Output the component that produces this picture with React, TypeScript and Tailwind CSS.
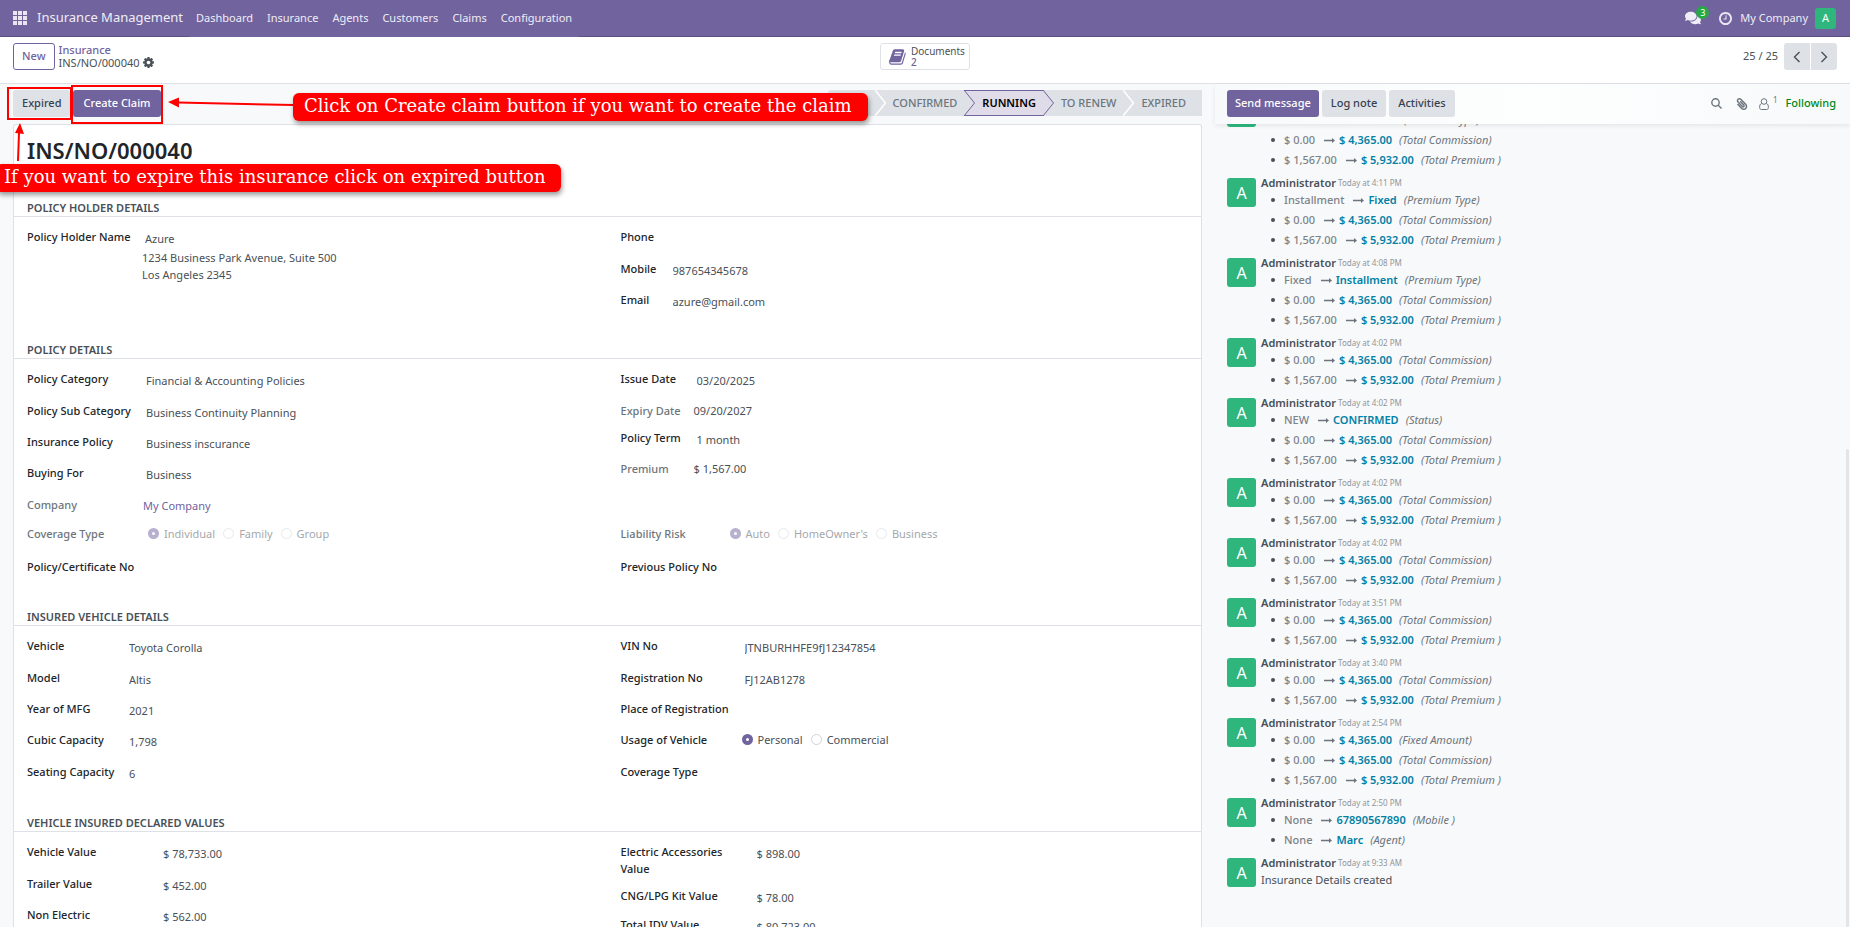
import { ReactNode } from 'react'
import { FaComments, FaPaperclip } from 'react-icons/fa'

interface Field {
    label: string
    value?: string
    height?: string
    muted?: boolean
    link?: boolean
    lines?: string[]
    options?: string[]
    disabled?: boolean
}

interface Change {
    from: string
    to: string
    field: string
}

interface Message {
    time: string
    changes?: Change[]
    body?: string
}

const menus = ['Dashboard', 'Insurance', 'Agents', 'Customers', 'Claims', 'Configuration']

const commission: Change = { from: '$ 0.00', to: '$ 4,365.00', field: 'Total Commission' }
const premium: Change = { from: '$ 1,567.00', to: '$ 5,932.00', field: 'Total Premium ' }

const messages: Message[] = [
    { time: '4:12 PM', changes: [{ from: 'Installment', to: 'Fixed', field: 'Premium Type' }, commission, premium] },
    { time: '4:11 PM', changes: [{ from: 'Installment', to: 'Fixed', field: 'Premium Type' }, commission, premium] },
    { time: '4:08 PM', changes: [{ from: 'Fixed', to: 'Installment', field: 'Premium Type' }, commission, premium] },
    { time: '4:02 PM', changes: [commission, premium] },
    { time: '4:02 PM', changes: [{ from: 'NEW', to: 'CONFIRMED', field: 'Status' }, commission, premium] },
    { time: '4:02 PM', changes: [commission, premium] },
    { time: '4:02 PM', changes: [commission, premium] },
    { time: '3:51 PM', changes: [commission, premium] },
    { time: '3:40 PM', changes: [commission, premium] },
    { time: '2:54 PM', changes: [{ ...commission, field: 'Fixed Amount' }, commission, premium] },
    {
        time: '2:50 PM',
        changes: [
            { from: 'None', to: '67890567890', field: 'Mobile ' },
            { from: 'None', to: 'Marc', field: 'Agent' },
        ],
    },
    { time: '9:33 AM', body: 'Insurance Details created' },
]

const holderLeft: Field[] = [
    { label: 'Policy Holder Name', value: 'Azure', lines: ['1234 Business Park Avenue, Suite 500', 'Los Angeles 2345'] },
]
const holderRight: Field[] = [
    { label: 'Phone', value: '', height: 'h-8' },
    { label: 'Mobile', value: '987654345678' },
    { label: 'Email', value: 'azure@gmail.com' },
]
const policyLeft: Field[] = [
    { label: 'Policy Category', value: 'Financial & Accounting Policies', height: 'h-8' },
    { label: 'Policy Sub Category', value: 'Business Continuity Planning' },
    { label: 'Insurance Policy', value: 'Business inscurance' },
    { label: 'Buying For', value: 'Business', height: 'h-8' },
    { label: 'Company', value: 'My Company', muted: true, link: true, height: 'h-[29px]' },
]
const policyRight: Field[] = [
    { label: 'Issue Date', value: '03/20/2025', height: 'h-8' },
    { label: 'Expiry Date', value: '09/20/2027', muted: true, height: 'h-[27px]' },
    { label: 'Policy Term', value: '1 month' },
    { label: 'Premium', value: '$ 1,567.00', muted: true },
]
const coverageLeft: Field[] = [
    { label: 'Coverage Type', options: ['Individual', 'Family', 'Group'], muted: true, disabled: true, height: 'h-[33px]' },
    { label: 'Policy/Certificate No', value: '' },
]
const coverageRight: Field[] = [
    { label: 'Liability Risk', options: ['Auto', "HomeOwner's", 'Business'], muted: true, disabled: true, height: 'h-[33px]' },
    { label: 'Previous Policy No', value: '' },
]
const vehicleLeft: Field[] = [
    { label: 'Vehicle', value: 'Toyota Corolla', height: 'h-8' },
    { label: 'Model', value: 'Altis' },
    { label: 'Year of MFG', value: '2021' },
    { label: 'Cubic Capacity', value: '1,798', height: 'h-8' },
    { label: 'Seating Capacity', value: '6', height: 'h-8' },
]
const vehicleRight: Field[] = [
    { label: 'VIN No', value: 'JTNBURHHFE9fJ12347854', height: 'h-8' },
    { label: 'Registration No', value: 'FJ12AB1278' },
    { label: 'Place of Registration', value: '' },
    { label: 'Usage of Vehicle', options: ['Personal', 'Commercial'], height: 'h-8' },
    { label: 'Coverage Type', value: '', height: 'h-8' },
]
const valuesLeft: Field[] = [
    { label: 'Vehicle Value', value: '$ 78,733.00', height: 'h-8' },
    { label: 'Trailer Value', value: '$ 452.00' },
    { label: 'Non Electric', value: '$ 562.00' },
]
const valuesRight: Field[] = [
    { label: 'Electric Accessories Value', value: '$ 898.00', height: 'h-11' },
    { label: 'CNG/LPG Kit Value', value: '$ 78.00', height: 'h-[29px]' },
    { label: 'Total IDV Value', value: '$ 80,723.00' },
]

function GridIcon() {
    return (
        <svg className="h-[14px] w-[14px]" viewBox="0 0 14 14" fill="#e9e6f2">
            {[0, 5, 10].map(y => [0, 5, 10].map(x => <rect key={`${x}-${y}`} x={x} y={y} width="4" height="4" />))}
        </svg>
    )
}

function CogIcon() {
    return (
        <svg className="h-[11px] w-[11px]" viewBox="128 128 1536 1536" fill="#495057">
            <path d="M1152 896q0-106-75-181t-181-75-181 75-75 181 75 181 181 75 181-75 75-181zm512-109v222q0 12-8 23t-20 13l-185 28q-19 54-39 91 35 50 107 138 10 12 10 25t-9 23q-27 37-99 108t-94 71q-12 0-26-9l-138-108q-44 23-91 38-16 136-29 186-7 28-36 28h-222q-14 0-24.500-8.500t-11.500-21.500l-28-184q-49-16-90-37l-141 107q-10 9-25 9-14 0-25-11-126-114-165-168-7-10-7-23 0-12 8-23 15-21 51-66.500t54-70.500q-27-50-41-99l-183-27q-13-2-21-12.500t-8-23.500v-222q0-12 8-23t19-13l186-28q14-46 39-92-40-57-107-138-10-12-10-24 0-10 9-23 26-36 98.500-107.500t94.500-71.500q13 0 26 10l138 107q44-23 91-38 16-136 29-186 7-28 36-28h222q14 0 24.500 8.500t11.500 21.500l28 184q49 16 90 37l142-107q9-9 24-9 13 0 25 10 129 119 165 170 7 8 7 22 0 12-8 23-15 21-51 66.500t-54 70.500q26 50 41 98l183 28q13 2 21 12.500t8 23.500z" />
        </svg>
    )
}

function ClockIcon() {
    return (
        <svg className="h-[13px] w-[13px]" viewBox="128 128 1536 1536" fill="#e9e6f2">
            <path d="M1024 544v448q0 14-9 23t-23 9h-320q-14 0-23-9t-9-23v-64q0-14 9-23t23-9h224v-352q0-14 9-23t23-9h64q14 0 23 9t9 23zm416 352q0-148-73-273t-198-198-273-73-273 73-198 198-73 273 73 273 198 198 273 73 273-73 198-198 73-273zm224 0q0 209-103 385.500t-279.500 279.500-385.500 103-385.500-103-279.500-279.500-103-385.500 103-385.500 279.500-279.500 385.500-103 385.500 103 279.500 279.500 103 385.500z" />
        </svg>
    )
}

function BookIcon() {
    return (
        <svg className="h-[18px] w-[18px]" viewBox="0 0 1792 1792" fill="#71639e">
            <path d="M1639 478q40 57 18 129l-275 906q-19 64-76.500 107.500t-122.500 43.500h-923q-77 0-148.500-53.500t-99.500-131.500q-24-67-2-127 0-4 3-27t4-37q1-8-3-21.500t-3-19.500q2-11 8-21t16.500-23.500 16.500-23.500q23-38 45-91.500t30-91.500q3-10 .5-30t-.5-28q3-11 17-28t17-23q21-36 42-92t25-90q1-9-2.500-32t.5-28q4-13 22-30.500t22-22.500q19-26 42.500-84.500t27.500-96.500q1-8-3-25.500t-2-26.500q2-8 9-18t18-23 17-21q8-12 16.500-30.500t15-35 16-36 19.500-32 26.500-23.500 36-11.500 47.500 5.500l-1 3q38-9 51-9h761q74 0 114 56t18 130l-274 906q-36 119-71.500 153.500t-128.500 34.500h-869q-27 0-38 15-11 16-1 43 24 70 144 70h923q29 0 56-15.500t35-41.500l300-987q7-22 5-57 38 15 59 43zm-1064 2q-4 13 2 22.500t20 9.500h608q13 0 25.500-9.500t16.500-22.500l21-64q4-13-2-22.500t-20-9.500h-608q-13 0-25.500 9.500t-16.500 22.500zm-83 256q-4 13 2 22.500t20 9.500h608q13 0 25.500-9.500t16.500-22.500l21-64q4-13-2-22.500t-20-9.500h-608q-13 0-25.500 9.500t-16.500 22.500z" />
        </svg>
    )
}

function Chevron({ left = false }: { left?: boolean }) {
    return (
        <svg className="h-3 w-2" viewBox="0 0 8 12" fill="none" stroke="#495057" strokeWidth="1.4">
            <path d={left ? 'M6.500 1 1.500 6l5 5' : 'M1.500 1l5 5-5 5'} />
        </svg>
    )
}

// Arrow-shaped joint between two status bar steps
function StepJoint({ kind }: { kind: 'plain' | 'enter' | 'leave' }) {
    const left = kind === 'leave' ? '#dfdbe9' : '#dee2e6'
    const right = kind === 'enter' ? '#dfdbe9' : '#dee2e6'
    return (
        <svg className="h-[26px] w-[11px] shrink-0" viewBox="0 0 11 26" fill="none">
            <rect width="11" height="26" fill={right} />
            <path d="M0 0l10.500 13L0 26z" fill={left} />
            {kind === 'enter' && <path d="M0 .5h11M0 25.500h11" stroke="#71639e" />}
            <path d="M0 0l10.500 13L0 26" stroke={kind === 'plain' ? '#fff' : '#71639e'} strokeWidth={kind === 'plain' ? 1.5 : 1} />
        </svg>
    )
}

function Radios({ field, id }: { field: Field; id: string }) {
    return (
        <div className={`flex items-center gap-2 leading-[17px] ${field.disabled ? 'pl-[5px] opacity-50' : ''}`}>
            {field.options?.map((option, i) => (
                <label key={option} className="flex items-center gap-[5px]">
                    <input
                        type="radio"
                        name={id}
                        defaultChecked={i === 0}
                        disabled={field.disabled}
                        className="h-[11px] w-[11px] appearance-none rounded-full border border-[#ced4da] bg-white checked:border-4 checked:border-[#71639e]"
                    />
                    {option}
                </label>
            ))}
        </div>
    )
}

function Fields({ fields, labelWidth, name }: { fields: Field[]; labelWidth: string; name: string }) {
    return (
        <div className="pl-[13px]">
            {fields.map((field, i) => {
                const id = `${name}-${i}`
                const labelClass = `${labelWidth} shrink-0 pr-1 font-medium leading-[17px] ${field.muted ? 'text-[#6c757d]' : 'text-[#212529]'}`
                return (
                    <div key={id} className={`flex items-start ${field.height || 'h-[31px]'}`}>
                        {field.options ? (
                            <span className={labelClass}>{field.label}</span>
                        ) : (
                            <label htmlFor={id} className={labelClass}>{field.label}</label>
                        )}
                        {field.options && <Radios field={field} id={id} />}
                        {!field.options && field.link && (
                            <a id={id} href="#company" className="pt-px leading-[17px] text-[#71639e]">{field.value}</a>
                        )}
                        {!field.options && !field.link && field.muted && (
                            <output id={id} className="leading-[17px]">{field.value}</output>
                        )}
                        {!field.options && !field.muted && (
                            <div className="min-w-0 flex-1">
                                <input
                                    id={id}
                                    defaultValue={field.value}
                                    className="mt-0.5 mb-0.5 block h-[17px] w-full bg-transparent pl-[3px] outline-none"
                                />
                                {field.lines?.map(line => (
                                    <p key={line} className="leading-[17px]">{line}</p>
                                ))}
                            </div>
                        )}
                    </div>
                )
            })}
        </div>
    )
}

function Section({ title, children }: { title: string; children: ReactNode }) {
    return (
        <section className="mb-[19px]">
            <h2 className="border-b border-[#dee2e6] pl-[13px] font-semibold leading-[17px] text-[#495057]">{title}</h2>
            <div className="pt-[11px]">{children}</div>
        </section>
    )
}

function Avatar({ className }: { className: string }) {
    return (
        <span className={`flex shrink-0 items-center justify-center rounded-[3px] bg-[#2eb67d] text-white ${className}`}>A</span>
    )
}

function MessageItem({ message }: { message: Message }) {
    return (
        <article className="flex gap-[5px] pb-[5px]">
            <Avatar className="mt-[3px] h-[29px] w-[29px] text-base" />
            <div>
                <header className="flex h-[15px] items-center gap-0.5 leading-[15px]">
                    <strong className="font-semibold text-[#495057]">Administrator</strong>
                    <time className="text-[8px] text-[#8f959b]">Today at {message.time}</time>
                </header>
                {message.body && <p className="h-5 leading-5">{message.body}</p>}
                {message.changes && (
                    <ul>
                        {message.changes.map(change => (
                            <li key={change.field} className="flex h-5 items-center pl-2.5">
                                <span className="mr-[9px] h-1 w-1 rounded-full bg-[#495057]" />
                                <span className="font-medium text-[#7c8288]">{change.from}</span>
                                <svg className="ml-[9px] mr-1 h-[5px] w-[11px]" viewBox="0 0 11 5" fill="#6c757d">
                                    <path d="M0 1.700h8V0l3 2.500L8 5V3.300H0z" />
                                </svg>
                                <span className="font-semibold text-[#0180a5]">{change.to}</span>
                                <em className="ml-[7px] text-[#6c757d]">({change.field})</em>
                            </li>
                        ))}
                    </ul>
                )}
            </div>
        </article>
    )
}

function Annotations() {
    return (
        <div className="pointer-events-none absolute inset-0 overflow-hidden">
            <div className="absolute left-[7px] top-[87px] h-[33px] w-[65px] border-2 border-[#ff0000]" />
            <div className="absolute left-[71px] top-[85px] h-[39px] w-[92px] border-2 border-[#ff0000]" />
            <svg className="absolute left-0 top-0 h-[200px] w-[300px]" viewBox="0 0 300 200" stroke="#ff0000" strokeWidth="2" fill="#ff0000">
                <path d="M294 105L178 102.500" />
                <path d="M168 102l11-4.500v10z" stroke="none" />
                <path d="M18 161l1-28" />
                <path d="M20 123l4 11-9-1z" stroke="none" />
            </svg>
            <p className="absolute left-[293px] top-[93px] h-7 w-[575px] whitespace-nowrap rounded-md bg-[#ff0000] pl-[11px] font-['DejaVu_Serif',serif] text-lg leading-[26px] text-white shadow-[1px_3px_5px_rgba(0,0,0,0.4)]">
                Click on Create claim button if you want to create the claim
            </p>
            <p className="absolute -left-1 top-[164px] h-7 w-[565px] whitespace-nowrap rounded-md bg-[#ff0000] pl-2 font-['DejaVu_Serif',serif] text-lg leading-[26px] text-white shadow-[1px_3px_5px_rgba(0,0,0,0.4)]">
                If you want to expire this insurance click on expired button
            </p>
        </div>
    )
}

export default function App() {
    const stepClass = 'h-[26px] bg-[#dee2e6] pl-[7px] font-medium text-[#6c757d]'

    return (
        <div className="relative flex h-screen flex-col overflow-hidden bg-[#f8f9fa] font-['Noto_Sans',sans-serif] text-[11px] text-[#495057]">
            {/* Navbar */}
            <header className="flex h-[37px] shrink-0 bg-[#71639e] text-[#efedf5]">
                <a href="#home" className="flex items-center gap-2.5 border-b border-[#5a4f7f] pl-[13px] pr-1.5 text-[13px]">
                    <GridIcon />
                    Insurance Management
                </a>
                <nav className="flex items-center">
                    {menus.map(menu => (
                        <button key={menu} className="h-full px-[7px]">{menu}</button>
                    ))}
                </nav>
                <div className="flex flex-1 items-center justify-end border-b border-[#5a4f7f] pr-3.5">
                    <button className="relative mr-[18px]" aria-label="Messages">
                        <FaComments className="h-4 w-4" />
                        <span className="absolute -top-1 left-[11px] h-[13px] w-[13px] rounded-full bg-[#28a745] text-[9px] leading-[13px] text-white">3</span>
                    </button>
                    <button className="mr-2" aria-label="Activities"><ClockIcon /></button>
                    <button className="mr-[7px]">My Company</button>
                    <Avatar className="h-[21px] w-[21px]" />
                </div>
            </header>

            {/* Control panel */}
            <div className="grid h-[47px] shrink-0 grid-cols-[1fr_auto_1fr] items-start border-b border-[#dee2e6] bg-white pl-[13px] pr-[13px] pt-1.5">
                <div className="flex gap-1">
                    <button className="h-[27px] rounded-[3px] border border-[#71639e] px-2 font-medium text-[#71639e]">New</button>
                    <div className="leading-[13px]">
                        <a href="#insurance" className="block font-medium text-[#71639e]">Insurance</a>
                        <span className="flex items-center gap-[3px]">
                            INS/NO/000040
                            <button aria-label="Actions"><CogIcon /></button>
                        </span>
                    </div>
                </div>
                <button className="flex h-[27px] w-[90px] items-center gap-1 rounded-[3px] border border-[#dee2e6] pl-2 text-left text-[10px] leading-[11px]">
                    <BookIcon />
                    <span>
                        Documents
                        <span className="block font-medium text-[#71639e]">2</span>
                    </span>
                </button>
                <div className="flex items-center justify-end gap-px">
                    <span className="mr-[5px] text-[11px]">25 / 25</span>
                    <button aria-label="Previous" className="flex h-[27px] w-[26px] items-center justify-center rounded-l-[3px] bg-[#dee2e6]"><Chevron left /></button>
                    <button aria-label="Next" className="flex h-[27px] w-[26px] items-center justify-center rounded-r-[3px] bg-[#dee2e6]"><Chevron /></button>
                </div>
            </div>

            <div className="grid min-h-0 flex-1 grid-cols-[1215fr_635fr]">
                {/* Form */}
                <main className="flex min-h-0 flex-col overflow-hidden px-[13px]">
                    <div className="flex h-10 shrink-0 justify-between pt-1.5">
                        <div className="flex gap-[3px]">
                            <button className="h-[27px] rounded-[3px] bg-[#dee2e6] px-[9px] font-medium text-[#374151]">Expired</button>
                            <button className="h-[27px] rounded-[3px] bg-[#71639e] px-2.5 font-medium text-white">Create Claim</button>
                        </div>
                        <div className="flex">
                            <button aria-label="Draft" className="h-[26px] w-[47px] rounded-l-[3px] bg-[#dee2e6]" />
                            <StepJoint kind="plain" />
                            <button className={`${stepClass} pr-[7px]`}>CONFIRMED</button>
                            <StepJoint kind="enter" />
                            <button className="h-[26px] border-y border-[#71639e] bg-[#dfdbe9] px-[7px] font-semibold text-black">RUNNING</button>
                            <StepJoint kind="leave" />
                            <button className={`${stepClass} pr-[7px]`}>TO RENEW</button>
                            <StepJoint kind="plain" />
                            <button className={`${stepClass} pr-4`}>EXPIRED</button>
                        </div>
                    </div>

                    <div className="min-h-0 flex-1 overflow-hidden rounded-t-[3px] border border-b-0 border-[#dee2e6] bg-white">
                        <h1 className="mb-[35px] pl-[13px] pt-[11px] text-[22px] font-semibold leading-7 text-[#212529]">INS/NO/000040</h1>
                        <Section title="POLICY HOLDER DETAILS">
                            <div className="grid grid-cols-2">
                                <Fields name="holder-left" fields={holderLeft} labelWidth="w-[115px]" />
                                <Fields name="holder-right" fields={holderRight} labelWidth="w-[49px]" />
                            </div>
                        </Section>
                        <Section title="POLICY DETAILS">
                            <div className="grid grid-cols-2">
                                <Fields name="policy-left" fields={policyLeft} labelWidth="w-[116px]" />
                                <Fields name="policy-right" fields={policyRight} labelWidth="w-[73px]" />
                                <Fields name="coverage-left" fields={coverageLeft} labelWidth="w-[116px]" />
                                <Fields name="coverage-right" fields={coverageRight} labelWidth="w-[104px]" />
                            </div>
                        </Section>
                        <Section title="INSURED VEHICLE DETAILS">
                            <div className="grid grid-cols-2">
                                <Fields name="vehicle-left" fields={vehicleLeft} labelWidth="w-[99px]" />
                                <Fields name="vehicle-right" fields={vehicleRight} labelWidth="w-[121px]" />
                            </div>
                        </Section>
                        <Section title="VEHICLE INSURED DECLARED VALUES">
                            <div className="grid grid-cols-2">
                                <Fields name="values-left" fields={valuesLeft} labelWidth="w-[133px]" />
                                <Fields name="values-right" fields={valuesRight} labelWidth="w-[133px]" />
                            </div>
                        </Section>
                    </div>
                </main>

                {/* Chatter */}
                <aside className="relative flex min-h-0 flex-col">
                    <div className="z-10 flex h-10 shrink-0 justify-between bg-gradient-to-r from-[#f8f9fa] via-[#fdfefe] to-[#f8f9fa] pl-3 pr-3.5 pt-1.5 shadow-[0_2px_5px_rgba(0,0,0,0.08)]">
                        <div className="flex gap-[3px]">
                            <button className="h-[27px] rounded-[3px] bg-[#71639e] px-2 font-medium text-white">Send message</button>
                            <button className="h-[27px] rounded-[3px] bg-[#dee2e6] px-[9px] font-medium text-[#374151]">Log note</button>
                            <button className="h-[27px] rounded-[3px] bg-[#dee2e6] px-[9px] font-medium text-[#374151]">Activities</button>
                        </div>
                        <div className="flex h-[27px] items-center text-[#6c757d]">
                            <button aria-label="Search Messages" className="mr-3.5">
                                <svg className="h-[11px] w-[11px]" viewBox="0 0 11 11" fill="none" stroke="currentColor" strokeWidth="1.4">
                                    <circle cx="4.500" cy="4.500" r="3.700" />
                                    <path d="M7.200 7.200l3.300 3.300" />
                                </svg>
                            </button>
                            <button aria-label="Attach files" className="mr-[11px]">
                                <FaPaperclip className="h-3 w-3 -scale-x-100" />
                            </button>
                            <button aria-label="Followers" className="mr-2 flex items-center gap-1">
                                <svg className="h-3 w-2.5" viewBox="0 0 10 12" fill="none" stroke="currentColor">
                                    <circle cx="5" cy="3.500" r="2.800" />
                                    <path d="M2.600 5.500C1 6 .6 7.500.6 9.500c0 1.200.7 2 1.700 2h5.400c1 0 1.700-.8 1.700-2 0-2-.4-3.500-2-4" />
                                </svg>
                                <span className="pb-2 text-[8px] leading-none">1</span>
                            </button>
                            <button className="font-medium text-[#008818]">Following</button>
                        </div>
                    </div>
                    <div className="flex min-h-0 flex-1 flex-col justify-end overflow-hidden pb-8 pl-3">
                        {messages.map((message, i) => (
                            <MessageItem key={i} message={message} />
                        ))}
                    </div>
                    <span className="absolute bottom-0 right-px h-[478px] w-[3px] rounded-full bg-[#e3e5e8]" />
                </aside>
            </div>

            <Annotations />
        </div>
    )
}
